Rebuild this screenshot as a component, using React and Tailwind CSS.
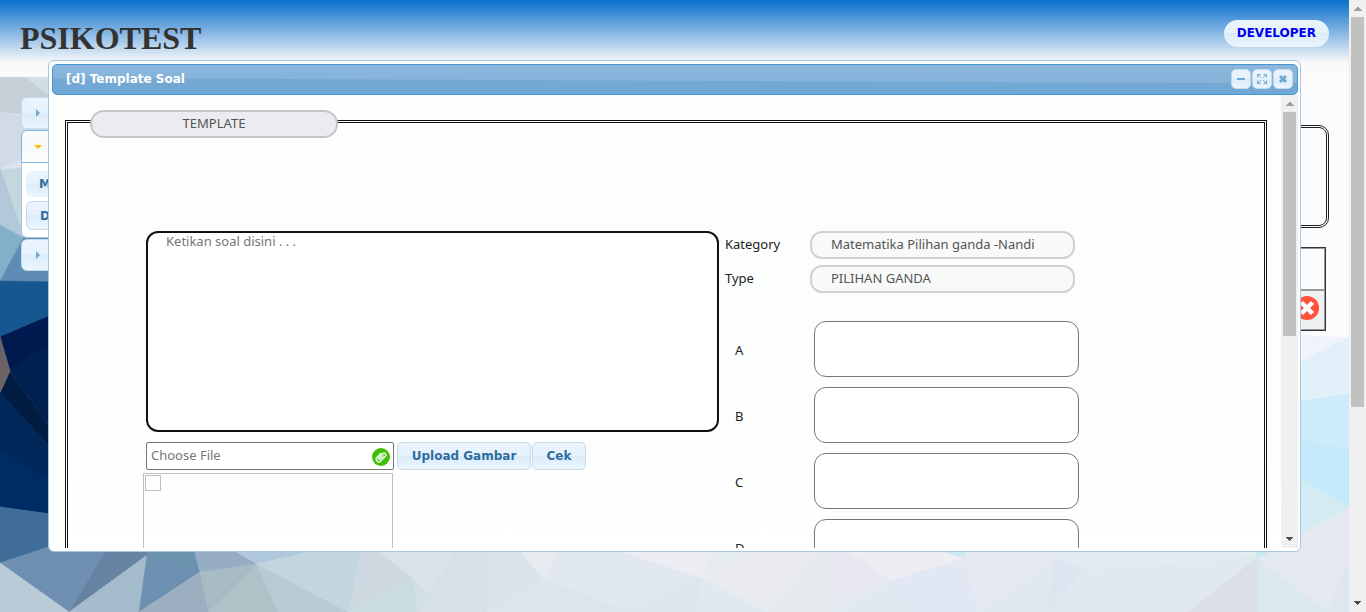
const facets = [
  ["0,60 25,77 48,94 80,120 0,112", "#c5d0d8"],
  ["25,60 25,77 48,94 300,94 300,60", "#cfdfe5"],
  ["0,112 80,127 80,165 21,160 0,168", "#d0dbe5"],
  ["0,168 21,160 80,165 80,175", "#dbe4ed"],
  ["0,170 21,168 80,170 80,240 24,238", "#c5d6de"],
  ["0,168 22,232 24,238 0,225", "#b3c8d8"],
  ["0,225 24,238 0,281", "#84afc8"],
  ["24,237 80,237 80,282 0,281", "#5f8cb5"],
  ["0,281 80,282 80,304 0,338", "#17578f"],
  ["0,337 80,303 80,330 10,371", "#00194f"],
  ["10,371 48,343 80,330 80,470 48,425", "#00214f"],
  ["10,371 48,425 80,470 48,445 0,393", "#001c40"],
  ["0,336 10,371 0,393", "#6b6266"],
  ["0,392 48,445 80,470 48,480 0,452", "#00285a"],
  ["0,451 48,479 80,490 80,518 0,507", "#002c65"],
  ["0,507 80,518 80,538 0,563", "#3f6d97"],
  ["0,563 48,547 112,545 69,612", "#6f90b0"],
  ["110,545 150,545 147,556 69,612", "#6683a3"],
  ["0,563 69,612 0,612", "#b9cbd7"],
  ["69,612 147,555 139,612", "#a4bccb"],
  ["147,555 147,545 193,545 200,572 139,612", "#6d90b0"],
  ["147,545 193,545 200,572 147,556", "#6a93b0"],
  ["193,545 225,545 257,564 200,573", "#97adc6"],
  ["225,545 340,545 257,564", "#b0c8dc"],
  ["139,612 200,572 209,612", "#9cafc0"],
  ["200,572 257,564 209,612", "#a7bcc4"],
  ["257,564 278,612 209,612", "#b0c2c8"],
  ["257,564 348,612 278,612", "#b9cad5"],
  ["257,564 340,545 363,545 348,612", "#c3d5de"],
  ["363,545 375,545 415,578 348,612", "#cdd8e1"],
  ["348,612 415,578 417,612", "#cadde2"],
  ["370,545 460,545 428,594 413,578", "#dae3ec"],
  ["413,577 428,594 417,612", "#d3dfe6"],
  ["460,545 487,545 487,612 417,612 428,594", "#d5e0e8"],
  ["487,545 515,545 545,580 560,612 487,612", "#dbe3ed"],
  ["515,545 563,545 545,580", "#e8ecf0"],
  ["563,545 600,545 702,578 628,612 545,580", "#e0e7f1"],
  ["545,580 628,612 487,612", "#dde5ec"],
  ["600,545 718,545 702,578", "#ecedf2"],
  ["702,578 696,612 628,612", "#dde6ee"],
  ["702,578 766,612 696,612", "#e0e8f1"],
  ["718,545 825,545 825,590 766,612 702,578", "#e9ebef"],
  ["715,545 770,545 702,578", "#e5edf0"],
  ["766,612 825,545 838,612", "#e5eaee"],
  ["825,545 840,545 892,581 838,612", "#e8e8f1"],
  ["840,545 930,545 965,558 892,581", "#ededf2"],
  ["920,545 972,545 965,558", "#cde9f3"],
  ["892,581 838,612 908,612", "#e0e8f0"],
  ["892,581 965,558 978,612 908,612", "#e1e8f4"],
  ["968,545 1053,545 1053,558 978,612 965,558", "#e6e9f1"],
  ["1053,558 1048,612 978,612", "#e2e8f0"],
  ["1053,545 1200,545 1257,558 1084,570", "#e4eaf1"],
  ["1053,558 1084,570 1048,612", "#dde5f0"],
  ["1084,570 1257,558 1188,612 1048,612", "#e1e8ef"],
  ["1180,545 1257,545 1257,558", "#e0eef0"],
  ["1257,558 1258,612 1188,612", "#dbdfe9"],
  ["1257,558 1328,612 1258,612", "#dce8ef"],
  ["1257,558 1349,508 1349,563 1328,612", "#e4e8f1"],
  ["1349,562 1349,612 1328,612", "#dfe6ee"],
  ["1255,545 1282,545 1257,558", "#c5e8f3"],
  ["1280,70 1349,70 1349,338 1280,334", "#fcfbfe"],
  ["1280,334 1349,338 1280,372", "#f0f3fc"],
  ["1280,372 1349,337 1349,395 1280,404", "#e2f0f9"],
  ["1280,404 1349,394 1349,451 1280,436", "#cdecfa"],
  ["1280,436 1349,450 1349,508 1280,467", "#c5eafb"],
  ["1280,467 1349,507 1280,545", "#d3ecf3"],
];

const glossy =
  "bg-[linear-gradient(#eaf4fd_0%,#e6f2fc_49%,#dcecfa_50%,#eaf5fe_100%)] border border-[#c5dbec]";
const plain =
  "bg-[linear-gradient(#eaf4fd_0%,#e6f2fc_49%,#dcecfa_50%,#eaf5fe_100%)]";
const bold = "font-['DejaVu_Sans',sans-serif] text-xs font-bold";

function Backdrop() {
  return (
    <svg aria-hidden="true" className="absolute inset-0 h-full w-full" viewBox="0 0 1349 612" preserveAspectRatio="none">
      <rect width="1349" height="612" fill="#e2e9f1" />
      {facets.map(([points, fill]) => (
        <polygon key={points} points={points} fill={fill} stroke={fill} strokeWidth="0.5" />
      ))}
    </svg>
  );
}

function Scrollbar({ share }) {
  return (
    <div aria-hidden="true" className="flex w-[17px] shrink-0 flex-col bg-[#f0f0f0]">
      <svg className="h-[17px] w-[17px]" viewBox="0 0 17 17" shapeRendering="crispEdges">
        <path d="M5 11h8v-1h-1v-1h-1v-1h-1v-1h-2v1h-1v1h-1v1h-1z" fill="#a0a0a0" />
      </svg>
      <div className="flex-1 px-0.5">
        <div className="bg-[#c1c1c1]" style={{ height: `${share * 100}%` }} />
      </div>
      <svg className="h-[17px] w-[17px]" viewBox="0 0 17 17" shapeRendering="crispEdges">
        <path d="M5 6h7v1h-1v1h-1v1h-1v1h-1v-1h-1v-1h-1v-1h-1z" fill="#505050" />
      </svg>
    </div>
  );
}

function Arrow({ open }) {
  return (
    <svg className="h-2 w-2" viewBox="0 0 8 8">
      {open ? <path d="M0 2h8L4 6z" fill="#f9bd01" /> : <path d="M2 0v8l4-4z" fill="#6da8d5" />}
    </svg>
  );
}

function SideMenu() {
  return (
    <nav className="flex w-52 flex-col">
      <button aria-label="Menu 1" className={`flex h-8 items-center rounded-md pl-3 ${glossy}`}>
        <Arrow />
      </button>
      <button
        aria-label="Menu 2"
        aria-expanded="true"
        className="mt-px flex h-[33px] items-center rounded-t-md border border-[#79b7e7] bg-[linear-gradient(#fafbfc,#f5f8f9_50%,#fcfdfd)] pl-3"
      >
        <Arrow open />
      </button>
      <div className="flex flex-col gap-1 rounded-b-md border border-t-0 border-[#a6c9e2] bg-white px-1 pt-2 pb-[7px]">
        <button className={`h-[26px] rounded-md pl-[13px] text-left text-[#2e6e9e] ${plain} ${bold}`}>M</button>
        <button className={`h-[29px] rounded-md pl-[13px] text-left text-[#2e6e9e] ${glossy} ${bold}`}>D</button>
      </div>
      <button aria-label="Menu 3" className={`mt-px flex h-8 items-center rounded-md pl-3 ${glossy}`}>
        <Arrow />
      </button>
    </nav>
  );
}

function Records() {
  return (
    <div className="flex w-52 flex-col gap-[19px] pt-7">
      <div className="mr-[-3px] h-[103px] rounded-[10px] border-[3px] border-double border-[#222]" />
      <table className="w-full border-separate border-spacing-0 border border-[#333]">
        <tbody>
          <tr>
            <td className="h-[42px] border border-[#999]" />
          </tr>
          <tr>
            <td className="h-10 border border-[#999] bg-[#f0f0f0] px-[5px] py-0">
              <button aria-label="Hapus" className="mb-1 ml-auto block h-6 w-6">
                <svg viewBox="0 0 24 24" className="h-6 w-6">
                  <circle cx="12" cy="12" r="12" fill="#ff533d" />
                  <path d="M8 8l8 8M16 8l-8 8" stroke="#fff" strokeWidth="4.4" strokeLinecap="square" />
                </svg>
              </button>
            </td>
          </tr>
        </tbody>
      </table>
    </div>
  );
}

function WindowButton({ label, children }) {
  return (
    <button
      aria-label={label}
      className={`flex h-5 w-5 items-center justify-center rounded-[5px] ${glossy}`}
    >
      <svg viewBox="0 0 10 10" className="h-2.5 w-2.5">
        {children}
      </svg>
    </button>
  );
}

function ReadonlyField({ id, label, value }) {
  return (
    <div className="flex items-center">
      <label htmlFor={id} className="w-[85px] shrink-0">
        {label}
      </label>
      <input
        id={id}
        disabled
        defaultValue={value}
        className="h-7 w-[265px] rounded-xl border-2 border-[#d0d2d1] bg-[#f8faf9] px-[19px] pb-0.5 text-[#545454]"
      />
    </div>
  );
}

function Option({ letter }) {
  return (
    <div className="flex items-center">
      <label htmlFor={`option-${letter}`} className="w-[89px] shrink-0 pt-1 pl-2.5">
        {letter}
      </label>
      <textarea
        id={`option-${letter}`}
        className="h-14 w-[265px] resize-none rounded-xl border border-[#767676] bg-white px-4"
      />
    </div>
  );
}

function QuestionForm() {
  return (
    <fieldset className="relative mt-[25px] flex gap-1.5 border-[3px] border-double border-[#111] pt-[108px] pb-10 pl-[75px]">
      <legend className="absolute -top-[13px] left-[22px] flex h-7 w-[248px] items-center justify-center rounded-[14px] border-2 border-[#c6c6ca] bg-[#ebebf0] text-[#545454]">
        TEMPLATE
      </legend>
      <div className="flex w-[576px] shrink-0 flex-col">
        <div className="flex flex-col gap-2.5 pl-[3px]">
          <textarea
            aria-label="Soal"
            placeholder="Ketikan soal disini . . ."
            className="h-[201px] w-full resize-none rounded-xl border-2 border-[#111] bg-white px-[18px] leading-4 placeholder:text-[#757575]"
          />
          <div className="flex gap-px">
            <div className="relative mr-0.5">
              <input
                aria-label="Choose File"
                placeholder="Choose File"
                className="h-7 w-[248px] rounded-[2px] border border-[#767676] bg-white pr-7 pb-0.5 pl-1 placeholder:text-[#757575]"
              />
              <svg aria-hidden="true" viewBox="0 0 18 18" className="absolute top-1.5 right-1 h-[18px] w-[18px]">
                <circle cx="9" cy="9" r="9" fill="#3fbf0b" />
                <g transform="rotate(45 9 9)" fill="none" stroke="#e9f9e2" strokeWidth="1.5" strokeLinecap="round">
                  <path d="M6.4 6.4v5.6a2.6 2.6 0 0 0 5.2 0V5.4a1.8 1.8 0 0 0-3.6 0V11.4a1 1 0 0 0 1.8 0V6.8" />
                </g>
              </svg>
            </div>
            <button className={`h-7 w-[134px] rounded-[5px] text-[#2e6e9e] ${glossy} ${bold}`}>Upload Gambar</button>
            <button className={`h-7 w-[54px] rounded-[5px] text-[#2e6e9e] ${glossy} ${bold}`}>Cek</button>
          </div>
        </div>
        <div className="mt-[3px] h-60 w-[250px] border border-[#c0c0c0] p-px">
          <div className="h-4 w-4 border border-[#c0c0c0]" />
        </div>
      </div>
      <div className="flex flex-col gap-7">
        <div className="flex flex-col gap-1.5">
          <ReadonlyField id="category" label="Kategory" value="Matematika Pilihan ganda -Nandi" />
          <ReadonlyField id="type" label="Type" value="PILIHAN GANDA" />
        </div>
        <div className="flex flex-col gap-2.5">
          {["A", "B", "C", "D"].map((letter) => (
            <Option key={letter} letter={letter} />
          ))}
        </div>
      </div>
    </fieldset>
  );
}

function TemplateDialog() {
  return (
    <section
      role="dialog"
      aria-label="[d] Template Soal"
      className="absolute inset-x-12 top-[60px] bottom-[60px] flex flex-col rounded-md border border-[#a6c9e2] bg-[linear-gradient(#fcfefd,#fcfefd_80%,#ffffff)] py-[3px] pr-0.5 pl-[3px]"
    >
      <header className="flex h-[31px] shrink-0 items-center rounded-[5px] border border-[#4297d7] bg-[linear-gradient(180.25deg,#8bb7dc_0%,#86b3da_52%,#74a9d4_55%,#6fa6d2_100%)] pr-1 pb-0.5 pl-[13px]">
        <h2 className={`flex-1 text-white ${bold}`}>[d] Template Soal</h2>
        <div className="flex gap-px">
          <WindowButton label="Minimize">
            <path d="M1 4h8v2H1z" fill="#6da8d5" />
          </WindowButton>
          <WindowButton label="Maximize">
            <path d="M.5 3.5v-3h3M6.5 .5h3v3M9.5 6.5v3h-3M3.5 9.5h-3v-3M1 1l2.8 2.8M9 1 6.2 3.8M9 9 6.2 6.2M1 9l2.8-2.8" fill="none" stroke="#6da8d5" />
          </WindowButton>
          <WindowButton label="Close">
            <path d="M2 2l6 6M8 2 2 8" fill="none" stroke="#6da8d5" strokeWidth="2.8" />
          </WindowButton>
        </div>
      </header>
      <div className="flex min-h-0 flex-1">
        <div className="flex-1 overflow-hidden pr-3.5 pl-[13px]">
          <QuestionForm />
        </div>
        <Scrollbar share={0.535} />
      </div>
    </section>
  );
}

export default function App() {
  return (
    <div className="flex h-screen font-['Noto_Sans',sans-serif] text-[13px] text-[#222]">
      <div className="relative flex-1 overflow-hidden">
        <Backdrop />
        <div className="relative flex flex-col">
          <header className="flex h-[77px] items-start justify-between bg-[linear-gradient(#0a6ecb_0px,#fafafa_63px)] px-5 pt-5">
            <h1 className="font-['Liberation_Serif',serif] text-[32px] leading-9 font-bold text-[#333]">PSIKOTEST</h1>
            <button className={`h-[27px] rounded-full px-[13px] pb-0.5 text-[#0000ee] ${plain} ${bold}`}>
              DEVELOPER
            </button>
          </header>
          <div className="flex justify-between pt-5 pr-[23px] pl-[21px]">
            <SideMenu />
            <Records />
          </div>
        </div>
        <TemplateDialog />
      </div>
      <Scrollbar share={0.675} />
    </div>
  );
}
